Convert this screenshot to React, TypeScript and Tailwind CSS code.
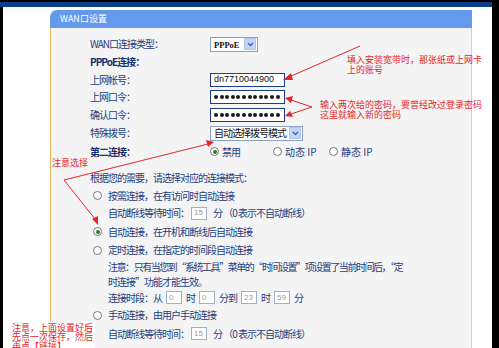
import React from "react";

const FONT = { fontFamily: '"Noto Sans CJK SC", "Noto Sans", sans-serif' };
const LATIN = { fontFamily: '"Liberation Sans", Arial, sans-serif' };

function Chevron() {
  return (
    <div className="w-[12px] h-[12px] bg-[#c3d4f7] border border-[#b0c4ee] flex items-center justify-center mr-[1px]">
      <svg width="7" height="5" viewBox="0 0 7 5">
        <path d="M1 1 L3.5 3.5 L6 1" stroke="#3d63b8" strokeWidth="1.4" fill="none" />
      </svg>
    </div>
  );
}

function Select({ w, children }: { w: string; children: React.ReactNode }) {
  return (
    <div className={`${w} h-[15px] bg-white border border-[#8aa0c4] flex items-center justify-between pl-[3px] text-[#111]`}>
      <span className="leading-none">{children}</span>
      <Chevron />
    </div>
  );
}

function Radio({ checked }: { checked?: boolean }) {
  return (
    <span className="w-[9px] h-[9px] rounded-full border border-[#777] bg-white flex items-center justify-center shrink-0">
      {checked && <span className="w-[4px] h-[4px] rounded-full bg-[#2f7a2f]" />}
    </span>
  );
}

function SmallBox({ v }: { v: string }) {
  return (
    <span
      className="inline-flex w-[16px] h-[13px] border border-[#9fb0cc] bg-white items-center pl-[2px] text-[8px] tracking-normal text-[#9a9a9a]"
      style={LATIN}
    >
      {v}
    </span>
  );
}

function Dots() {
  return (
    <div className="w-[75px] h-[14px] bg-white border border-[#1c3c8f] flex items-center gap-[1.6px] pl-[3px]">
      {Array.from({ length: 12 }).map((_, i) => (
        <span key={i} className="w-[4px] h-[4px] rounded-full bg-[#1a1a1a]" />
      ))}
    </div>
  );
}

function Row({ h, children, cls = "" }: { h: string; children: React.ReactNode; cls?: string }) {
  return <div className={`${h} flex items-center ${cls}`}>{children}</div>;
}

function Label({ children, bold }: { children: React.ReactNode; bold?: boolean }) {
  return <div className={`w-[120px] shrink-0 ${bold ? "font-bold text-[#17306b]" : ""}`}>{children}</div>;
}

export default function App() {
  return (
    <div className="w-[499px] h-[348px] bg-black overflow-hidden relative text-[10px] tracking-[-1px] text-[#22407f]" style={FONT}>
      <div className="h-[2px]" />
      <div className="w-[492px] h-[5px] bg-[#0d3e8e]" />
      <div className="flex h-[341px]">
        <div className="w-[3px] bg-black" />
        <div className="w-[489px] bg-white pt-[3px] flex flex-col">
          <div className="ml-[47px] w-[422px] flex flex-col flex-1">
            <div className="h-[18px] bg-[#6499ee] rounded-tl-[7px] flex items-center pl-[10px] text-white text-[9px] tracking-normal">
              WAN口设置
            </div>
            <div className="flex-1 bg-[#f4f4f4] border-l border-[#eeb460] border-r border-r-[#e6cfa8] pl-[39px] pt-[7px] leading-none">
              <Row h="h-[18px]">
                <Label>WAN口连接类型：</Label>
                <Select w="w-[48px]">
                  <span className="font-bold text-[8.5px] tracking-normal" style={{ fontFamily: '"Liberation Serif", serif' }}>PPPoE</span>
                </Select>
              </Row>
              <Row h="h-[18px]">
                <Label bold>PPPoE连接：</Label>
              </Row>
              <Row h="h-[17px]">
                <Label>上网帐号：</Label>
                <div className="w-[75px] h-[14px] bg-white border border-[#1c3c8f] flex items-center pl-[3px] text-[9px] tracking-normal text-[#111]" style={LATIN}>
                  dn7710044900
                </div>
              </Row>
              <Row h="h-[18px]">
                <Label>上网口令：</Label>
                <Dots />
              </Row>
              <Row h="h-[18px]">
                <Label>确认口令：</Label>
                <Dots />
              </Row>
              <Row h="h-[18px]">
                <Label>特殊拨号：</Label>
                <Select w="w-[93px]">自动选择拨号模式</Select>
              </Row>
              <Row h="h-[19px]">
                <Label bold>第二连接：</Label>
                <div className="flex items-center gap-[3px] w-[63px]">
                  <Radio checked />
                  <span>禁用</span>
                </div>
                <div className="flex items-center gap-[3px] w-[56px]">
                  <Radio />
                  <span className="tracking-normal">动态 IP</span>
                </div>
                <div className="flex items-center gap-[3px]">
                  <Radio />
                  <span className="tracking-normal">静态 IP</span>
                </div>
              </Row>
              <Row h="h-[18px]" cls="mt-[8px]">
                根据您的需要，请选择对应的连接模式：
              </Row>
              <Row h="h-[17px]" cls="pl-[3px] gap-[6px]">
                <Radio />
                <span>按需连接，在有访问时自动连接</span>
              </Row>
              <Row h="h-[18px]" cls="pl-[18px] gap-[2px]">
                <span>自动断线等待时间：</span>
                <SmallBox v="15" />
                <span className="ml-[4px]">分 （0 表示不自动断线）</span>
              </Row>
              <Row h="h-[19px]" cls="pl-[3px] gap-[6px]">
                <Radio checked />
                <span>自动连接，在开机和断线后自动连接</span>
              </Row>
              <Row h="h-[18px]" cls="pl-[3px] gap-[6px]">
                <Radio />
                <span>定时连接，在指定的时间段自动连接</span>
              </Row>
              <Row h="h-[15px]" cls="pl-[18px] whitespace-nowrap tracking-[-1.45px]">
                注意：只有当您到“系统工具”菜单的“时间设置”项设置了当前时间后，“定
              </Row>
              <Row h="h-[15px]" cls="pl-[18px]">
                时连接”功能才能生效。
              </Row>
              <Row h="h-[17px]" cls="pl-[18px] gap-[4px]">
                <span>连接时段：从</span>
                <SmallBox v="0" />
                <span>时</span>
                <SmallBox v="0" />
                <span>分到</span>
                <SmallBox v="23" />
                <span>时</span>
                <SmallBox v="59" />
                <span>分</span>
              </Row>
              <Row h="h-[18px]" cls="pl-[3px] gap-[6px]">
                <Radio />
                <span>手动连接，由用户手动连接</span>
              </Row>
              <Row h="h-[19px]" cls="pl-[18px] gap-[2px]">
                <span>自动断线等待时间：</span>
                <SmallBox v="15" />
                <span className="ml-[4px]">分 （0 表示不自动断线）</span>
              </Row>
            </div>
          </div>
        </div>
        <div className="w-[7px] bg-black" />
      </div>

      {/* annotations */}
      <svg className="absolute left-0 top-0 pointer-events-none" width="499" height="348">
        <g stroke="#e3262c" strokeWidth="1" fill="none">
          <line x1="360" y1="46" x2="289" y2="77" />
          <line x1="312" y1="107" x2="291" y2="100" />
          <line x1="312" y1="107" x2="291" y2="114" />
          <line x1="64" y1="180" x2="208" y2="144" />
          <line x1="64" y1="180" x2="95" y2="219" />
        </g>
        <g fill="#e3262c">
          <polygon points="283,80 291,73 293,80" />
          <polygon points="285,98 293,96 291,103" />
          <polygon points="285,116 290,111 293,117" />
          <polygon points="214,142 206,140 208,147" />
          <polygon points="98,225 92,219 98,216" />
        </g>
      </svg>
      <div className="absolute left-[347px] top-[55px] text-[#e3262c] text-[9px] tracking-normal leading-[10px] whitespace-nowrap">
        填入安装宽带时，那张纸或上网卡
        <br />
        上的账号
      </div>
      <div className="absolute left-[320px] top-[100px] text-[#e3262c] text-[9px] tracking-normal leading-[10px] whitespace-nowrap">
        输入两次给的密码，要曾经改过登录密码
        <br />
        这里就输入新的密码
      </div>
      <div className="absolute left-[52px] top-[158px] text-[#e3262c] text-[9px] tracking-normal leading-[10px] whitespace-nowrap">
        注意选择
      </div>
      <div className="absolute left-[9px] top-[322px] w-[86px] h-[26px] bg-white pl-[3px] pt-[1px] text-[#e3262c] text-[9px] tracking-normal leading-[9px] whitespace-nowrap">
        注意，上面设置好后
        <br />
        先点一次保存，然后
        <br />
        再点【链接】
      </div>
    </div>
  );
}
